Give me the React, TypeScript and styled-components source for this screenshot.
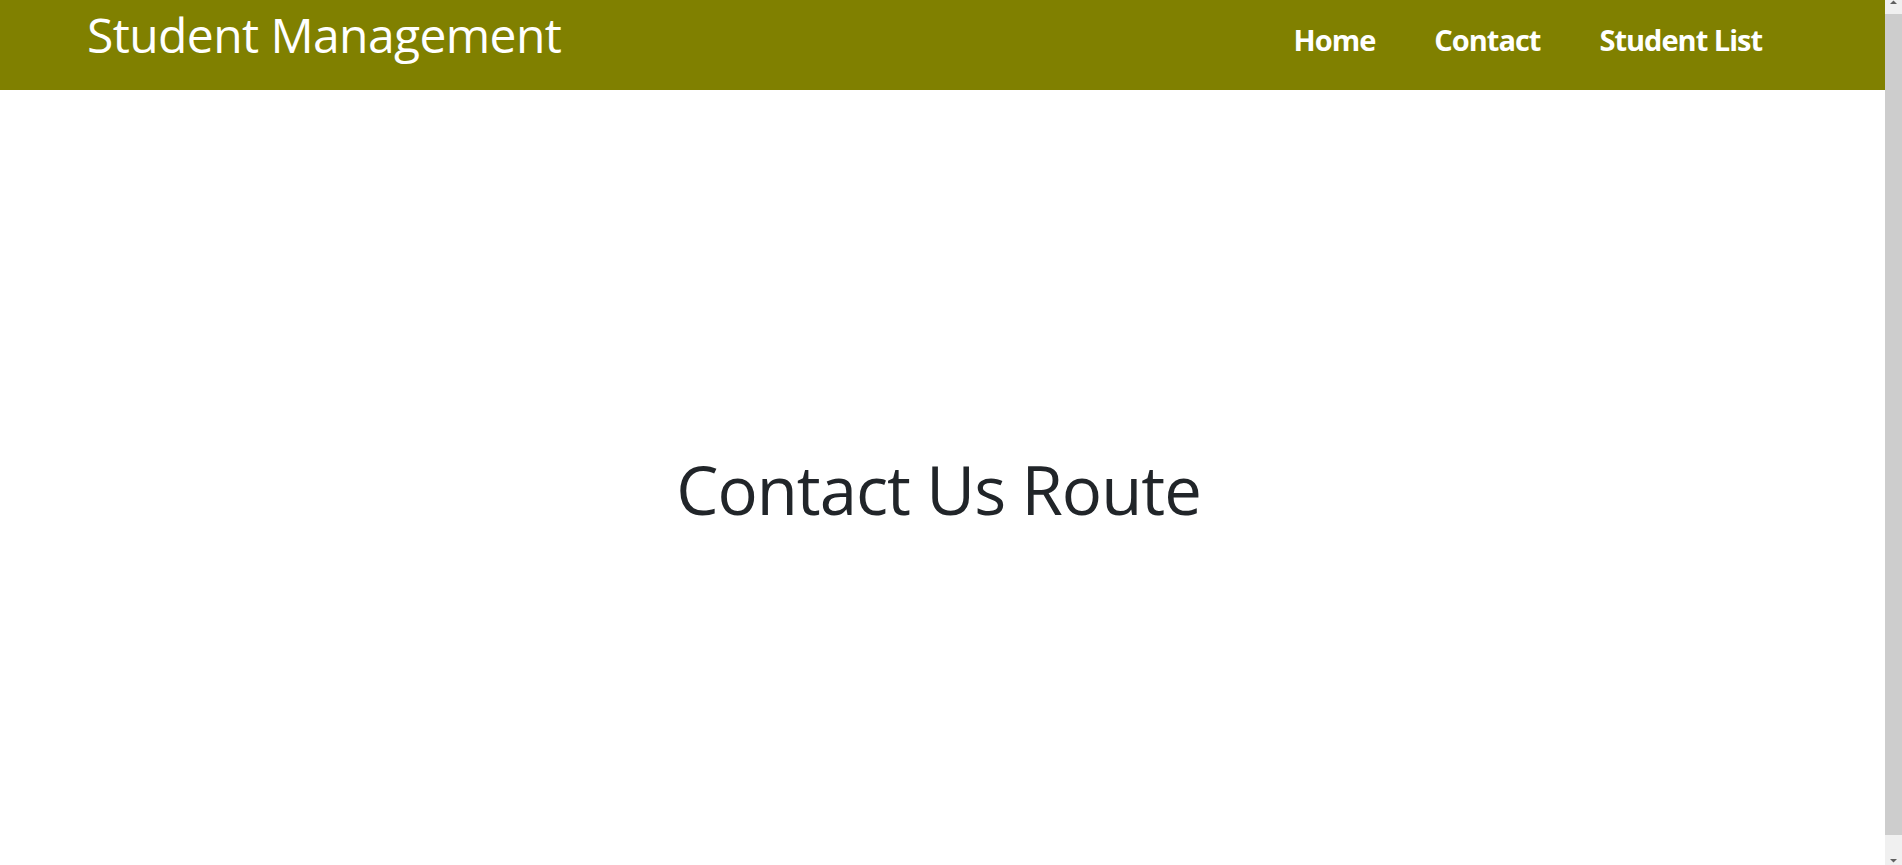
import React from "react"
import styled, { createGlobalStyle } from "styled-components"

const GlobalStyle = createGlobalStyle`
  html, body {
    height: 100%;
    overflow: hidden;
  }
  body {
    margin: 0;
    font-family: "Open Sans", "Noto Sans", "Liberation Sans", sans-serif;
    color: #212529;
    background: #fff;
  }
`

const Frame = styled.div`
  display: flex;
  height: 100vh;
`

const Page = styled.div`
  flex: 1;
  min-width: 0;
  display: flex;
  flex-direction: column;
`

/* fake window scrollbar, the real one is hidden in the capture */
const Scrollbar = styled.div`
  width: 17px;
  flex: none;
  background: #f0f0f0;
  display: flex;
  flex-direction: column;
  align-items: center;
  justify-content: space-between;
`

const Thumb = styled.div`
  flex: 1;
  width: 100%;
  margin: 10px 0 24px;
  background: #cdcdcd;
`

const Arrow = styled.svg`
  flex: none;
  display: block;
`

const Navbar = styled.nav`
  height: 90px;
  flex: none;
  background: #808000;
  display: flex;
  align-items: flex-start;
  justify-content: space-between;
  padding: 0 123px 0 87px;
  box-sizing: border-box;
`

const Brand = styled.a`
  color: #fff;
  font-size: 48px;
  line-height: 70px;
  text-decoration: none;
  letter-spacing: -0.6px;
`

const NavList = styled.ul`
  display: flex;
  gap: 59px;
  list-style: none;
  margin: 0;
  padding: 0;
`

const NavLink = styled.a`
  color: #fff;
  font-size: 29px;
  font-weight: 700;
  line-height: 80px;
  text-decoration: none;
  letter-spacing: -1px;
`

const Main = styled.main`
  flex: 1;
  display: flex;
  align-items: center;
  justify-content: center;
  padding-top: 22px;
`

const Heading = styled.h1`
  margin: 0;
  font-size: 67px;
  font-weight: 400;
  letter-spacing: -1px;
  padding-right: 8px;
`

export default function App() {
  return (
    <Frame>
      <GlobalStyle />
      <Page>
        <Navbar>
          <Brand href="#">Student Management</Brand>
          <NavList>
            <li><NavLink href="#">Home</NavLink></li>
            <li><NavLink href="#">Contact</NavLink></li>
            <li><NavLink href="#">Student List</NavLink></li>
          </NavList>
        </Navbar>
        <Main>
          <Heading>Contact Us Route</Heading>
        </Main>
      </Page>
      <Scrollbar>
        <Arrow width="17" height="4" viewBox="0 0 17 4">
          <path d="M5 4 L8.5 0.5 L12 4 Z" fill="#606060" />
        </Arrow>
        <Thumb />
        <Arrow width="17" height="6" viewBox="0 0 17 6">
          <path d="M5 0 L8.5 3.5 L12 0 Z" fill="#606060" />
        </Arrow>
      </Scrollbar>
    </Frame>
  )
}
